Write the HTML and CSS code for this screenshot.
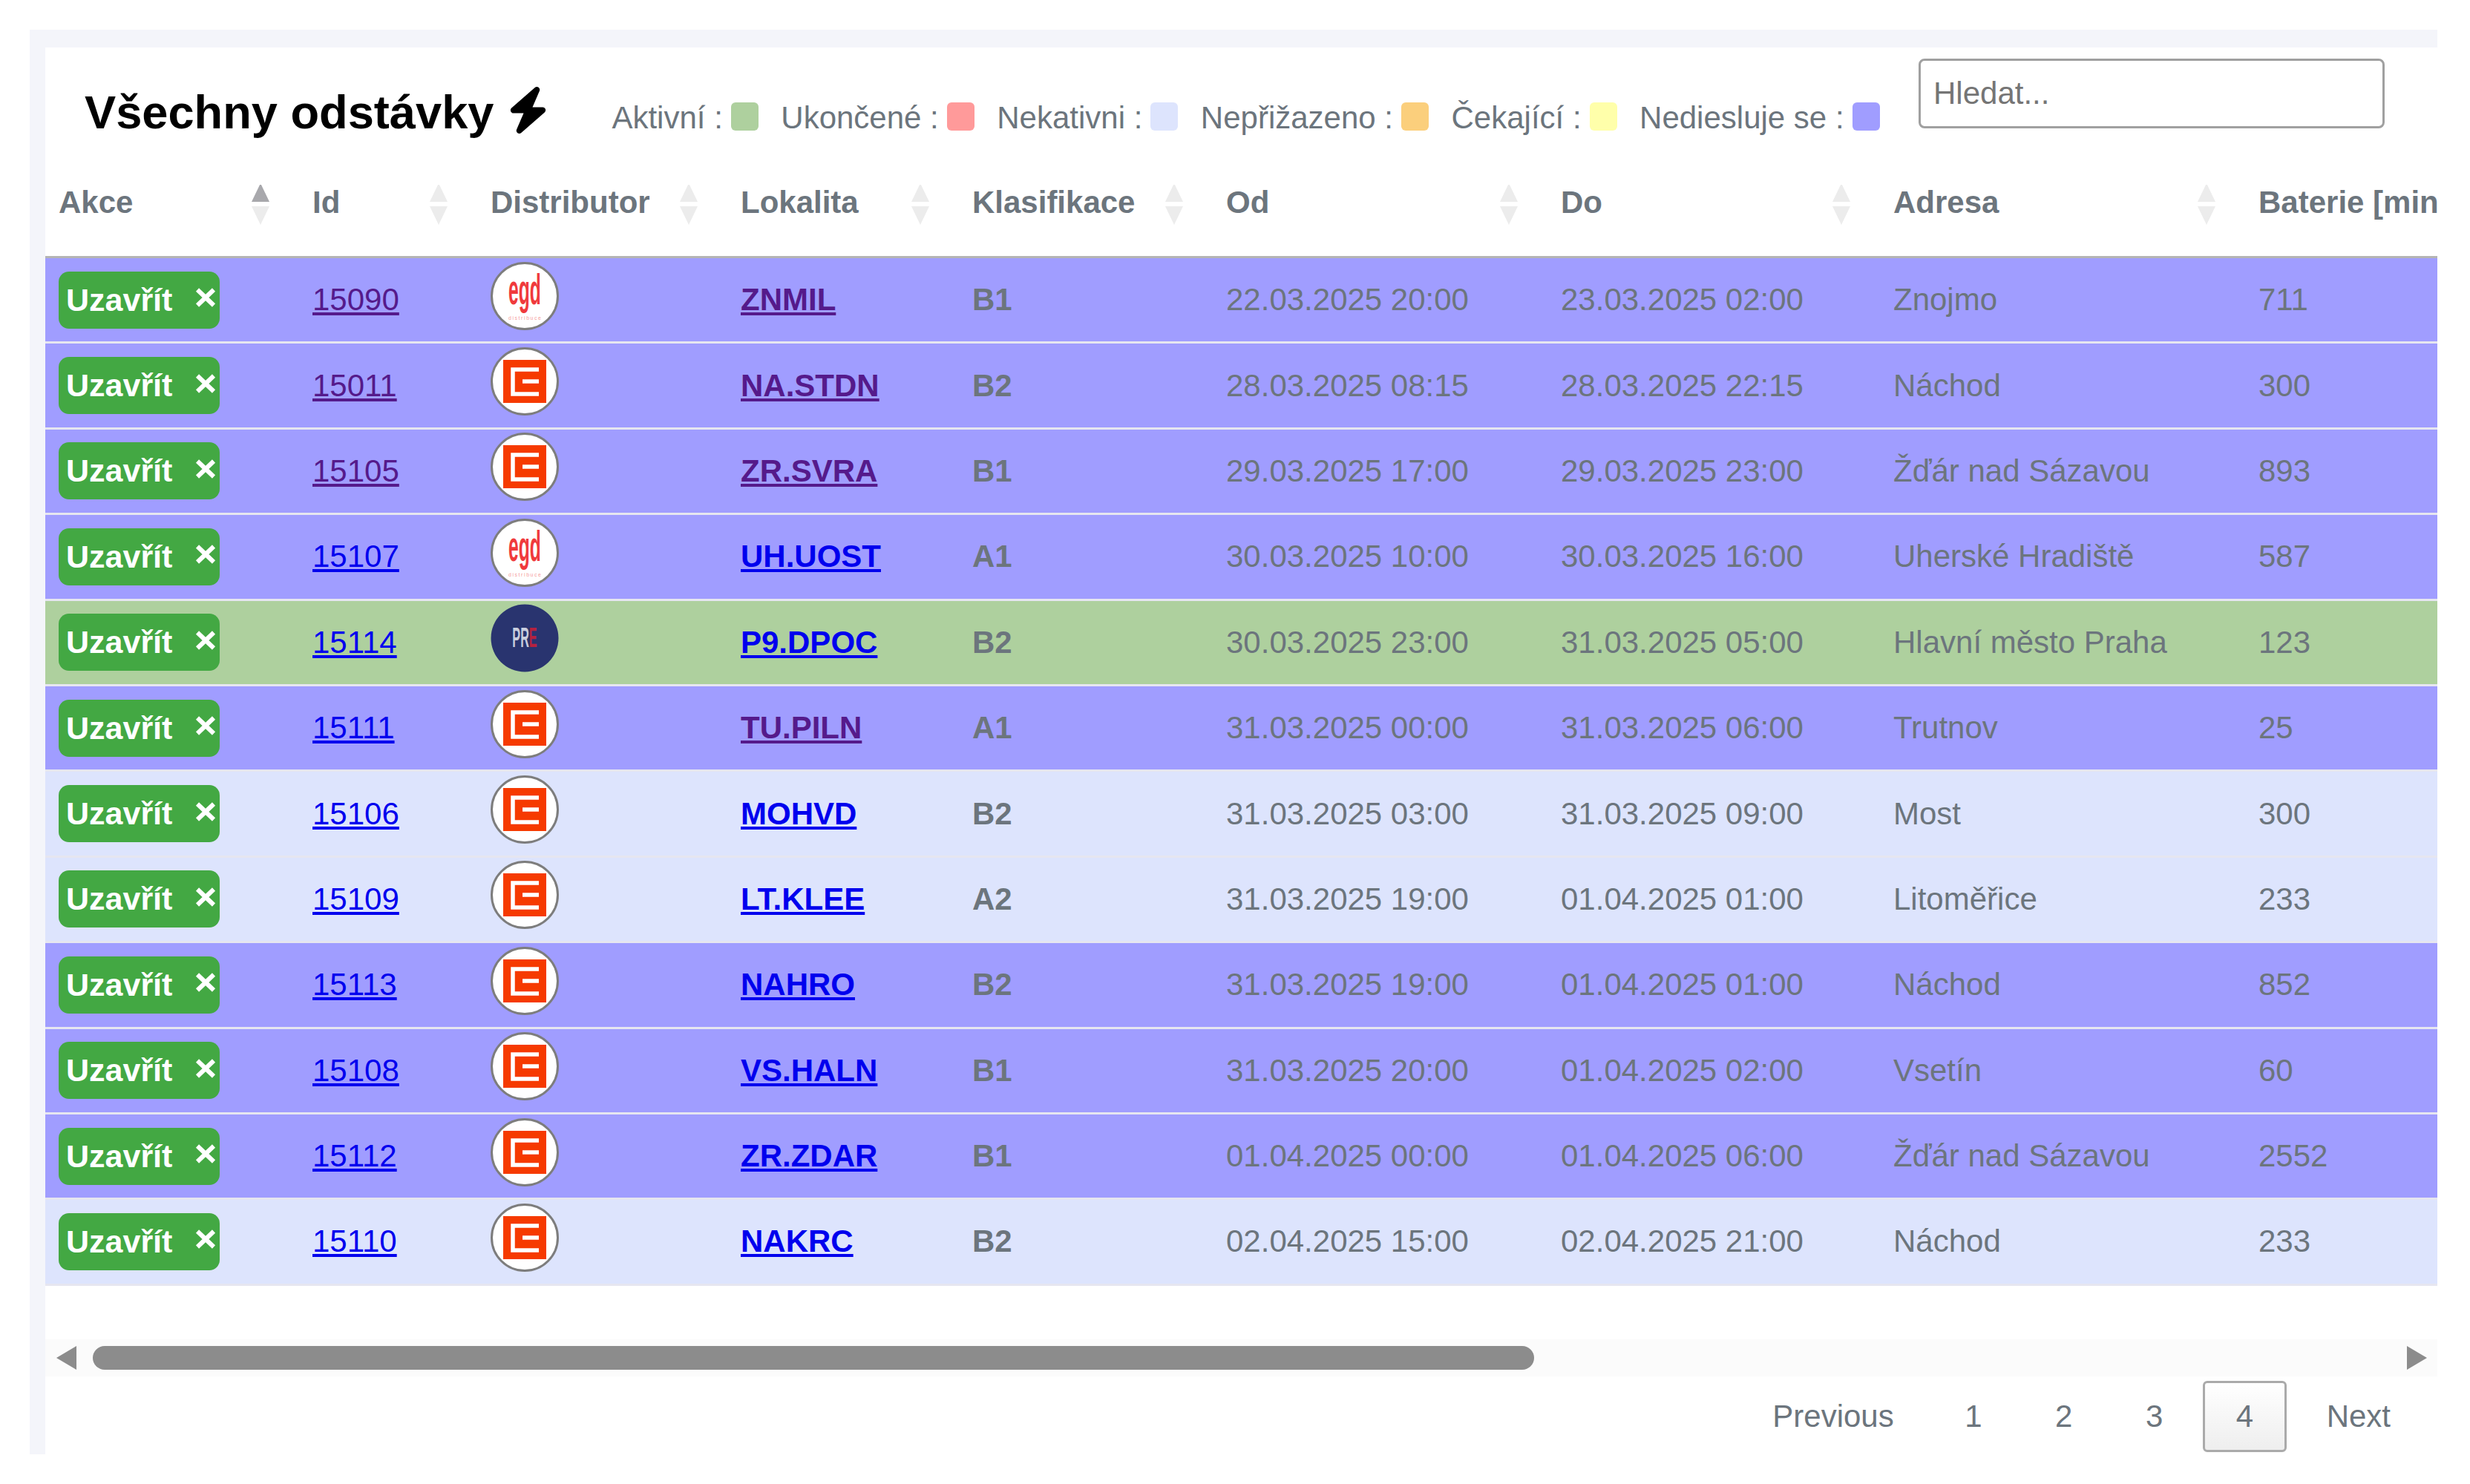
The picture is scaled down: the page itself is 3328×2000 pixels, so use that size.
FILE: index.html
```html
<!DOCTYPE html>
<html lang="cs">
<head>
    <meta charset="UTF-8">
    <title>Všechny odstávky</title>
    <link rel="stylesheet" href="styles.css">
</head>
<body>
    <svg class="defs" width="0" height="0">
        <symbol id="logo-cez" viewBox="0 0 92 92">
            <circle cx="46" cy="46" r="44.5" fill="#fff" stroke="#7d7d7d" stroke-width="3"/>
            <rect x="17" y="17" width="58" height="58" fill="#f63a00"/>
            <path d="M65 30H30V63H65M43 46H65" fill="none" stroke="#fff" stroke-width="5.5"/>
        </symbol>
        <symbol id="logo-egd" viewBox="0 0 92 92">
            <circle cx="46" cy="46" r="44.5" fill="#fff" stroke="#7d7d7d" stroke-width="3"/>
            <text transform="translate(46 57) scale(.77 1.8)" text-anchor="middle" font-family="Liberation Sans" font-weight="700" font-size="32" fill="#f03a3c">egd</text>
            <text x="24" y="78" textLength="44" font-family="Liberation Sans" font-size="7" fill="#f6a0a0">distribuce</text>
        </symbol>
        <symbol id="logo-pre" viewBox="0 0 92 92">
            <circle cx="46" cy="46" r="45.5" fill="#29346f"/>
            <text transform="translate(46 58) scale(.45 1)" text-anchor="middle" font-family="Liberation Sans" font-weight="700" font-size="36" fill="#c9cede">PR<tspan fill="#b5213f">E</tspan></text>
        </symbol>
        <symbol id="icon-close" viewBox="0 0 28 26">
            <path d="M3 2.500 25 23.500M25 2.500 3 23.500" fill="none" stroke="#fff" stroke-width="6"/>
        </symbol>
    </svg>

    <div class="card">
        <div class="card-header">
            <h2 class="title">Všechny odstávky
                <svg class="bolt" viewBox="34 0 380 512"><path d="M349.4 44.6c5.900-13.700 1.500-29.700-10.600-38.500s-28.600-8-39.900 1.800l-256 224c-10 8.800-13.600 22.900-8.900 35.300S50.700 288 64 288H175.500L98.600 467.400c-5.900 13.700-1.500 29.700 10.600 38.500s28.600 8 39.900-1.800l256-224c10-8.800 13.600-22.900 8.900-35.300s-16.600-20.700-30-20.700H272.500L349.400 44.600z"/></svg>
            </h2>
            <div class="legend">
                <span class="legend-item">Aktivní : <i class="swatch active"></i></span>
                <span class="legend-item">Ukončené : <i class="swatch ended"></i></span>
                <span class="legend-item">Nekativni : <i class="swatch inactive"></i></span>
                <span class="legend-item">Nepřižazeno : <i class="swatch unassigned"></i></span>
                <span class="legend-item">Čekající : <i class="swatch waiting"></i></span>
                <span class="legend-item">Nediesluje se : <i class="swatch notwatched"></i></span>
            </div>
            <input class="search" type="text" placeholder="Hledat...">
        </div>

        <div class="table-wrap">
            <table class="outages">
                <colgroup>
                    <col class="c-akce"><col class="c-id"><col class="c-dist"><col class="c-lok"><col class="c-kla"><col class="c-od"><col class="c-do"><col class="c-adr"><col class="c-bat">
                </colgroup>
                <thead>
                    <tr>
                        <th class="sorted">Akce</th>
                        <th>Id</th>
                        <th>Distributor</th>
                        <th>Lokalita</th>
                        <th>Klasifikace</th>
                        <th>Od</th>
                        <th>Do</th>
                        <th>Adresa</th>
                        <th class="nosort">Baterie [min]</th>
                    </tr>
                </thead>
                <tbody>
                    <tr class="notwatched">
                        <td><button class="close-btn">Uzavřít<svg class="x"><use href="#icon-close"/></svg></button></td>
                        <td><a class="visited" href="#">15090</a></td>
                        <td><svg class="logo"><use href="#logo-egd"/></svg></td>
                        <td><a class="loc visited" href="#">ZNMIL</a></td>
                        <td class="cls">B1</td>
                        <td>22.03.2025 20:00</td>
                        <td>23.03.2025 02:00</td>
                        <td>Znojmo</td>
                        <td>711</td>
                    </tr>
                    <tr class="notwatched">
                        <td><button class="close-btn">Uzavřít<svg class="x"><use href="#icon-close"/></svg></button></td>
                        <td><a class="visited" href="#">15011</a></td>
                        <td><svg class="logo"><use href="#logo-cez"/></svg></td>
                        <td><a class="loc visited" href="#">NA.STDN</a></td>
                        <td class="cls">B2</td>
                        <td>28.03.2025 08:15</td>
                        <td>28.03.2025 22:15</td>
                        <td>Náchod</td>
                        <td>300</td>
                    </tr>
                    <tr class="notwatched">
                        <td><button class="close-btn">Uzavřít<svg class="x"><use href="#icon-close"/></svg></button></td>
                        <td><a class="visited" href="#">15105</a></td>
                        <td><svg class="logo"><use href="#logo-cez"/></svg></td>
                        <td><a class="loc visited" href="#">ZR.SVRA</a></td>
                        <td class="cls">B1</td>
                        <td>29.03.2025 17:00</td>
                        <td>29.03.2025 23:00</td>
                        <td>Žďár nad Sázavou</td>
                        <td>893</td>
                    </tr>
                    <tr class="notwatched">
                        <td><button class="close-btn">Uzavřít<svg class="x"><use href="#icon-close"/></svg></button></td>
                        <td><a href="#">15107</a></td>
                        <td><svg class="logo"><use href="#logo-egd"/></svg></td>
                        <td><a class="loc" href="#">UH.UOST</a></td>
                        <td class="cls">A1</td>
                        <td>30.03.2025 10:00</td>
                        <td>30.03.2025 16:00</td>
                        <td>Uherské Hradiště</td>
                        <td>587</td>
                    </tr>
                    <tr class="active">
                        <td><button class="close-btn">Uzavřít<svg class="x"><use href="#icon-close"/></svg></button></td>
                        <td><a href="#">15114</a></td>
                        <td><svg class="logo"><use href="#logo-pre"/></svg></td>
                        <td><a class="loc" href="#">P9.DPOC</a></td>
                        <td class="cls">B2</td>
                        <td>30.03.2025 23:00</td>
                        <td>31.03.2025 05:00</td>
                        <td>Hlavní město Praha</td>
                        <td>123</td>
                    </tr>
                    <tr class="notwatched">
                        <td><button class="close-btn">Uzavřít<svg class="x"><use href="#icon-close"/></svg></button></td>
                        <td><a href="#">15111</a></td>
                        <td><svg class="logo"><use href="#logo-cez"/></svg></td>
                        <td><a class="loc visited" href="#">TU.PILN</a></td>
                        <td class="cls">A1</td>
                        <td>31.03.2025 00:00</td>
                        <td>31.03.2025 06:00</td>
                        <td>Trutnov</td>
                        <td>25</td>
                    </tr>
                    <tr class="inactive">
                        <td><button class="close-btn">Uzavřít<svg class="x"><use href="#icon-close"/></svg></button></td>
                        <td><a href="#">15106</a></td>
                        <td><svg class="logo"><use href="#logo-cez"/></svg></td>
                        <td><a class="loc" href="#">MOHVD</a></td>
                        <td class="cls">B2</td>
                        <td>31.03.2025 03:00</td>
                        <td>31.03.2025 09:00</td>
                        <td>Most</td>
                        <td>300</td>
                    </tr>
                    <tr class="inactive">
                        <td><button class="close-btn">Uzavřít<svg class="x"><use href="#icon-close"/></svg></button></td>
                        <td><a href="#">15109</a></td>
                        <td><svg class="logo"><use href="#logo-cez"/></svg></td>
                        <td><a class="loc" href="#">LT.KLEE</a></td>
                        <td class="cls">A2</td>
                        <td>31.03.2025 19:00</td>
                        <td>01.04.2025 01:00</td>
                        <td>Litoměřice</td>
                        <td>233</td>
                    </tr>
                    <tr class="notwatched">
                        <td><button class="close-btn">Uzavřít<svg class="x"><use href="#icon-close"/></svg></button></td>
                        <td><a href="#">15113</a></td>
                        <td><svg class="logo"><use href="#logo-cez"/></svg></td>
                        <td><a class="loc" href="#">NAHRO</a></td>
                        <td class="cls">B2</td>
                        <td>31.03.2025 19:00</td>
                        <td>01.04.2025 01:00</td>
                        <td>Náchod</td>
                        <td>852</td>
                    </tr>
                    <tr class="notwatched">
                        <td><button class="close-btn">Uzavřít<svg class="x"><use href="#icon-close"/></svg></button></td>
                        <td><a href="#">15108</a></td>
                        <td><svg class="logo"><use href="#logo-cez"/></svg></td>
                        <td><a class="loc" href="#">VS.HALN</a></td>
                        <td class="cls">B1</td>
                        <td>31.03.2025 20:00</td>
                        <td>01.04.2025 02:00</td>
                        <td>Vsetín</td>
                        <td>60</td>
                    </tr>
                    <tr class="notwatched">
                        <td><button class="close-btn">Uzavřít<svg class="x"><use href="#icon-close"/></svg></button></td>
                        <td><a href="#">15112</a></td>
                        <td><svg class="logo"><use href="#logo-cez"/></svg></td>
                        <td><a class="loc" href="#">ZR.ZDAR</a></td>
                        <td class="cls">B1</td>
                        <td>01.04.2025 00:00</td>
                        <td>01.04.2025 06:00</td>
                        <td>Žďár nad Sázavou</td>
                        <td>2552</td>
                    </tr>
                    <tr class="inactive">
                        <td><button class="close-btn">Uzavřít<svg class="x"><use href="#icon-close"/></svg></button></td>
                        <td><a href="#">15110</a></td>
                        <td><svg class="logo"><use href="#logo-cez"/></svg></td>
                        <td><a class="loc" href="#">NAKRC</a></td>
                        <td class="cls">B2</td>
                        <td>02.04.2025 15:00</td>
                        <td>02.04.2025 21:00</td>
                        <td>Náchod</td>
                        <td>233</td>
                    </tr>
                </tbody>
            </table>
        </div>

        <div class="scrollbar">
            <span class="arrow left"></span>
            <div class="track"><div class="thumb"></div></div>
            <span class="arrow right"></span>
        </div>

        <div class="pagination">
            <a class="page prev">Previous</a>
            <a class="page">1</a>
            <a class="page">2</a>
            <a class="page">3</a>
            <a class="page current">4</a>
            <a class="page">Next</a>
        </div>
    </div>
</body>
</html>
```

FILE: styles.css
```css
* {
    box-sizing: border-box;
}

html, body {
    background: #fff;
}

body {
    margin: 0;
    padding: 40px 0 0 40px;
    font-family: "Liberation Sans", Arial, sans-serif;
    font-size: 42px;
    color: #6c757d;
}

.defs {
    position: absolute;
}

.card {
    width: 3244px;
    height: 1920px;
    padding: 24px 0 0 21px;
    background: #fff;
    box-shadow: inset 21px 24px 0 #f4f5fa;
    overflow: hidden;
}

.card-header {
    display: flex;
    height: 185px;
    position: relative;
}

.title {
    margin: 51px 0 0 53px;
    font-size: 63.2px;
    line-height: 72px;
    font-weight: 700;
    color: #000;
    white-space: nowrap;
    display: flex;
    gap: 22px;
    height: 72px;
}

.bolt {
    width: 49px;
    height: 63px;
    margin-top: 2px;
}

.legend {
    display: flex;
    gap: 30.500px;
    margin: 71px 0 0 88px;
    height: 48px;
    white-space: nowrap;
}

.legend-item {
    display: flex;
    gap: 11px;
    line-height: 48px;
}

.swatch {
    display: block;
    width: 37px;
    height: 38px;
    margin-top: 3px;
    border-radius: 6px;
}

.swatch.active { background: #aed09e; }
.swatch.ended { background: #ff9a9a; }
.swatch.inactive { background: #dde4fd; }
.swatch.unassigned { background: #fbcf7c; }
.swatch.waiting { background: #ffffaa; }
.swatch.notwatched { background: #a09dff; }

.search {
    position: absolute;
    left: 2524px;
    top: 15px;
    width: 628px;
    height: 94px;
    padding: 0 17px;
    border: 3px solid #a0a0a0;
    border-radius: 8px;
    font: inherit;
    color: #6c757d;
    background: #fff;
}

.search::placeholder {
    color: #757575;
}

.table-wrap {
    width: 3223px;
    overflow: hidden;
}

.outages {
    width: 3340px;
    table-layout: fixed;
    border-collapse: collapse;
}

.c-akce { width: 342px; }
.c-id { width: 240px; }
.c-dist { width: 337px; }
.c-lok { width: 312px; }
.c-kla { width: 342px; }
.c-od { width: 451px; }
.c-do { width: 448px; }
.c-adr { width: 492px; }
.c-bat { width: 376px; }

.outages th {
    position: relative;
    padding: 0 0 48px 18px;
    text-align: left;
    font-weight: 700;
    white-space: nowrap;
    line-height: 48px;
}

.outages th::before,
.outages th::after {
    content: "";
    position: absolute;
    right: 40px;
    width: 0;
    height: 0;
    border-left: 12.500px solid transparent;
    border-right: 12.500px solid transparent;
}

.outages th::before {
    top: -2px;
    border-bottom: 25px solid #ececec;
}

.outages th::after {
    top: 29px;
    border-top: 25px solid #ececec;
}

.outages th.sorted::before {
    border-bottom-color: #a8a8ac;
}

.outages th.nosort::before,
.outages th.nosort::after {
    display: none;
}

.outages tbody {
    border-top: 3px solid #b4b4b4;
}

.outages tbody tr {
    height: 115.4px;
    border-bottom: 3px solid #e6e6f0;
}

.outages td {
    padding: 0 0 0 18px;
    white-space: nowrap;
}

tr.notwatched { background: #a09dff; }
tr.active { background: #aed09e; }
tr.inactive { background: #dde4fd; }

.outages a {
    color: #0000ee;
}

.outages a.visited {
    color: #551a8b;
}

.loc, .cls {
    font-weight: 700;
}

.close-btn {
    display: flex;
    align-items: center;
    justify-content: space-between;
    width: 217px;
    height: 77px;
    padding: 0 5px 0 10px;
    border: 0;
    border-radius: 14px;
    background: #43a843;
    color: #fff;
    font: 700 43px "Liberation Sans", Arial, sans-serif;
}

.x {
    width: 28px;
    height: 26px;
    margin-top: -6px;
}

.logo {
    display: block;
    width: 92px;
    height: 92px;
    margin-top: -11px;
}

.scrollbar {
    display: flex;
    align-items: center;
    width: 3223px;
    height: 50px;
    margin-top: 72px;
    padding: 0 14px 0 15px;
    background: #fbfbfb;
}

.track {
    flex: 1;
    margin: 0 22px;
    height: 32px;
}

.thumb {
    width: 1942px;
    height: 32px;
    border-radius: 16px;
    background: #8c8c8c;
}

.arrow {
    width: 0;
    height: 0;
    border-top: 16px solid transparent;
    border-bottom: 16px solid transparent;
}

.arrow.left {
    border-right: 27px solid #8c8c8c;
}

.arrow.right {
    border-left: 27px solid #8c8c8c;
}

.pagination {
    display: flex;
    justify-content: flex-end;
    gap: 8.500px;
    width: 3223px;
    padding: 6px 18px 0 0;
}

.page {
    height: 96px;
    padding: 0 42px;
    line-height: 90px;
    border: 3px solid transparent;
    border-radius: 6px;
}

.page.prev {
    margin-right: -3px;
}

.page.current {
    border-color: #aaa;
    background: linear-gradient(#fff, #eee);
}
```
